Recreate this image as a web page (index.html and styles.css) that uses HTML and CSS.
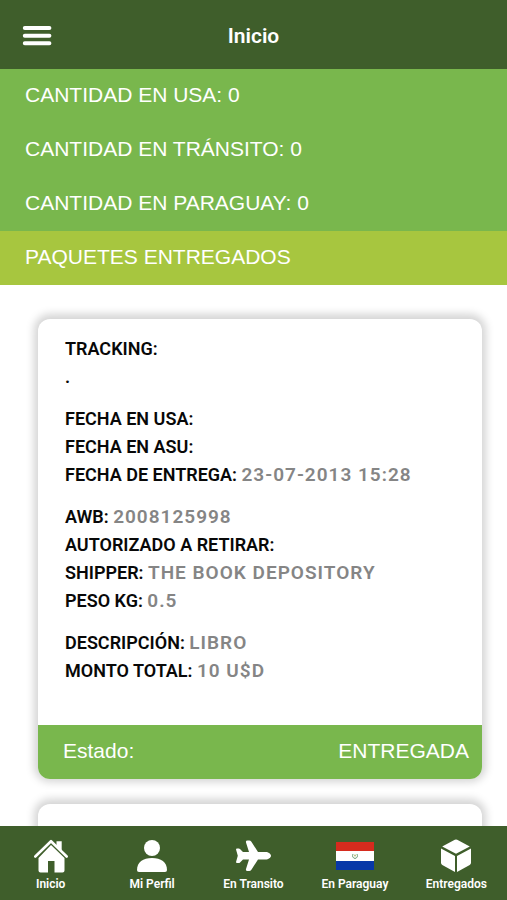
FILE: index.html
```html
<!DOCTYPE html>
<html lang="es">
<head>
<meta charset="utf-8">
<meta name="viewport" content="width=device-width, initial-scale=1">
<title>Inicio</title>
<link rel="stylesheet" href="styles.css">
</head>
<body>
<header class="topbar">
  <button class="menu" type="button" aria-label="Menú">
    <svg width="30" height="20" viewBox="0 0 30 20"><path d="M2.800 2H27.400M2.800 9.700H27.400M2.800 17.300H27.400" stroke="#fff" stroke-width="4" stroke-linecap="round"/></svg>
  </button>
  <h1 class="title">Inicio</h1>
</header>
<main class="content">
  <ul class="summary">
    <li>CANTIDAD EN USA: 0</li>
    <li>CANTIDAD EN TRÁNSITO: 0</li>
    <li>CANTIDAD EN PARAGUAY: 0</li>
  </ul>
  <h2 class="section">PAQUETES ENTREGADOS</h2>
  <div class="cards">
    <article class="card">
      <div class="details">
        <div class="group">
          <p>TRACKING:</p>
          <p>.</p>
        </div>
        <div class="group">
          <p>FECHA EN USA:</p>
          <p>FECHA EN ASU:</p>
          <p>FECHA DE ENTREGA: <span class="value">23-07-2013 15:28</span></p>
        </div>
        <div class="group">
          <p>AWB: <span class="value">2008125998</span></p>
          <p>AUTORIZADO A RETIRAR:</p>
          <p>SHIPPER: <span class="value">THE BOOK DEPOSITORY</span></p>
          <p>PESO KG: <span class="value">0.5</span></p>
        </div>
        <div class="group">
          <p>DESCRIPCIÓN: <span class="value">LIBRO</span></p>
          <p>MONTO TOTAL: <span class="value">10 U$D</span></p>
        </div>
      </div>
      <footer class="status"><span>Estado:</span><span>ENTREGADA</span></footer>
    </article>
    <article class="card"></article>
  </div>
</main>
<nav class="tabs">
  <a class="tab" href="#inicio">
    <svg width="38" height="36" viewBox="0 0 38 36"><path d="M24.500 3.200h5.200v9.500l-5.200-5z" fill="#fff"/><path d="M3.300 18.500 19 3.200l15.700 15.300" fill="none" stroke="#fff" stroke-width="2.600" stroke-linecap="round" stroke-linejoin="round"/><path d="M19 7 32.500 20v12.500q0 2-2 2H22.500V23h-6.500v11.500h-7.500q-2 0-2-2V20z" fill="#fff"/></svg>
    <span>Inicio</span>
  </a>
  <a class="tab" href="#perfil">
    <svg width="38" height="36" viewBox="0 0 38 36"><circle cx="19" cy="10" r="8" fill="#fff"/><path d="M4 32c0-8 6-12 15-12s15 4 15 12q0 2-2 2H6q-2 0-2-2z" fill="#fff"/></svg>
    <span>Mi Perfil</span>
  </a>
  <a class="tab" href="#transito">
    <svg width="38" height="36" viewBox="0 0 38 36"><path d="M12 4.500q-.5-2 1.500-2h1.700q1.300 0 2.200 1.200L24 14h7.500c3 0 5.500 2 5.500 3.700S34.500 21.500 31.500 21.500H24l-6.600 10.300Q16.500 33 15.200 33h-1.700q-2 0-1.500-2l3-9.500H9l-3 3q-.5.500-1.200.5H3q-1.200 0-.9-1.200l1.700-6-1.700-6q-.3-1.300.9-1.300h1.800q.7 0 1.200.5L9 14h6z" fill="#fff"/></svg>
    <span>En Transito</span>
  </a>
  <a class="tab" href="#paraguay">
    <svg width="38" height="36" viewBox="0 0 38 36"><path d="M0 4h38v9H0z" fill="#d62b1e"/><path d="M0 13h38v10H0z" fill="#fff"/><path d="M0 23h38v9H0z" fill="#0838a8"/><path d="M17 16q-1.500 3.500 2 4.500 3.500-1 2-4.500" fill="none" stroke="#6d9d72"/><circle cx="19" cy="17.500" r="1" fill="#b9bd7b"/></svg>
    <span>En Paraguay</span>
  </a>
  <a class="tab" href="#entregados">
    <svg width="38" height="36" viewBox="0 0 38 36"><path d="m17.800 1.800q1.200-.6 2.400 0l12.600 6.600L19 15.800 5.200 8.400zM4 10.500l14 7.600v15.800L5.300 27Q4 26.300 4 24.800zM34 10.500l-14 7.600v15.800L32.700 27q1.300-.7 1.300-2.200z" fill="#fff"/></svg>
    <span>Entregados</span>
  </a>
</nav>
</body>
</html>
```
FILE: styles.css
```css
* {
  box-sizing: border-box;
}

body {
  display: flex;
  flex-direction: column;
  height: 100vh;
  margin: 0;
  background: #fff;
  font-family: Roboto, sans-serif;
}

h1, h2, p, ul {
  margin: 0;
  padding: 0;
}

.topbar {
  display: grid;
  grid-template-columns: 1fr auto 1fr;
  align-items: center;
  flex: none;
  height: 69px;
  padding: 2px 22px 0;
  background: #3f5e2b;
  color: #fff;
}

.menu {
  display: flex;
  justify-self: start;
  padding: 0;
  border: 0;
  background: none;
}

.title {
  font-size: 21px;
  font-weight: 600;
}

.content {
  flex: 1;
  min-height: 0;
  overflow-y: auto;
  scrollbar-width: none;
}

.summary {
  background: #79b74d;
  list-style: none;
}

.summary li,
.section {
  padding: 0 25px 2px;
  color: #fff;
  font: 400 21px/52px "Liberation Sans", sans-serif;
}

.section {
  background: #a7c63f;
}

.cards {
  display: flex;
  flex-direction: column;
  gap: 25px;
  padding: 34px 25px 25px 38px;
}

.card {
  min-height: 240px;
  overflow: hidden;
  border-radius: 12px;
  background: #fff;
  box-shadow: 0 -1px 8px 4px #d4d4d4;
}

.details {
  display: flex;
  flex-direction: column;
  gap: 14px;
  padding: 16px 27px 40px;
  color: #080808;
  font-size: 18px;
  font-weight: 600;
  line-height: 28px;
}

.value {
  color: #858585;
  font-size: 19px;
  line-height: 20px;
  letter-spacing: 1px;
}

.status {
  display: flex;
  justify-content: space-between;
  padding: 0 13px 2px 25px;
  background: #79b74d;
  color: #fff;
  font: 400 21px/52px "Liberation Sans", sans-serif;
}

.tabs {
  display: grid;
  grid-template-columns: repeat(5, 1fr);
  flex: none;
  height: 74px;
  padding-top: 12px;
  background: #3f5e2b;
}

.tab {
  display: flex;
  flex-direction: column;
  align-items: center;
  gap: 2px;
  color: #fff;
  font-size: 12px;
  font-weight: 600;
  line-height: 16px;
  text-decoration: none;
}
```
